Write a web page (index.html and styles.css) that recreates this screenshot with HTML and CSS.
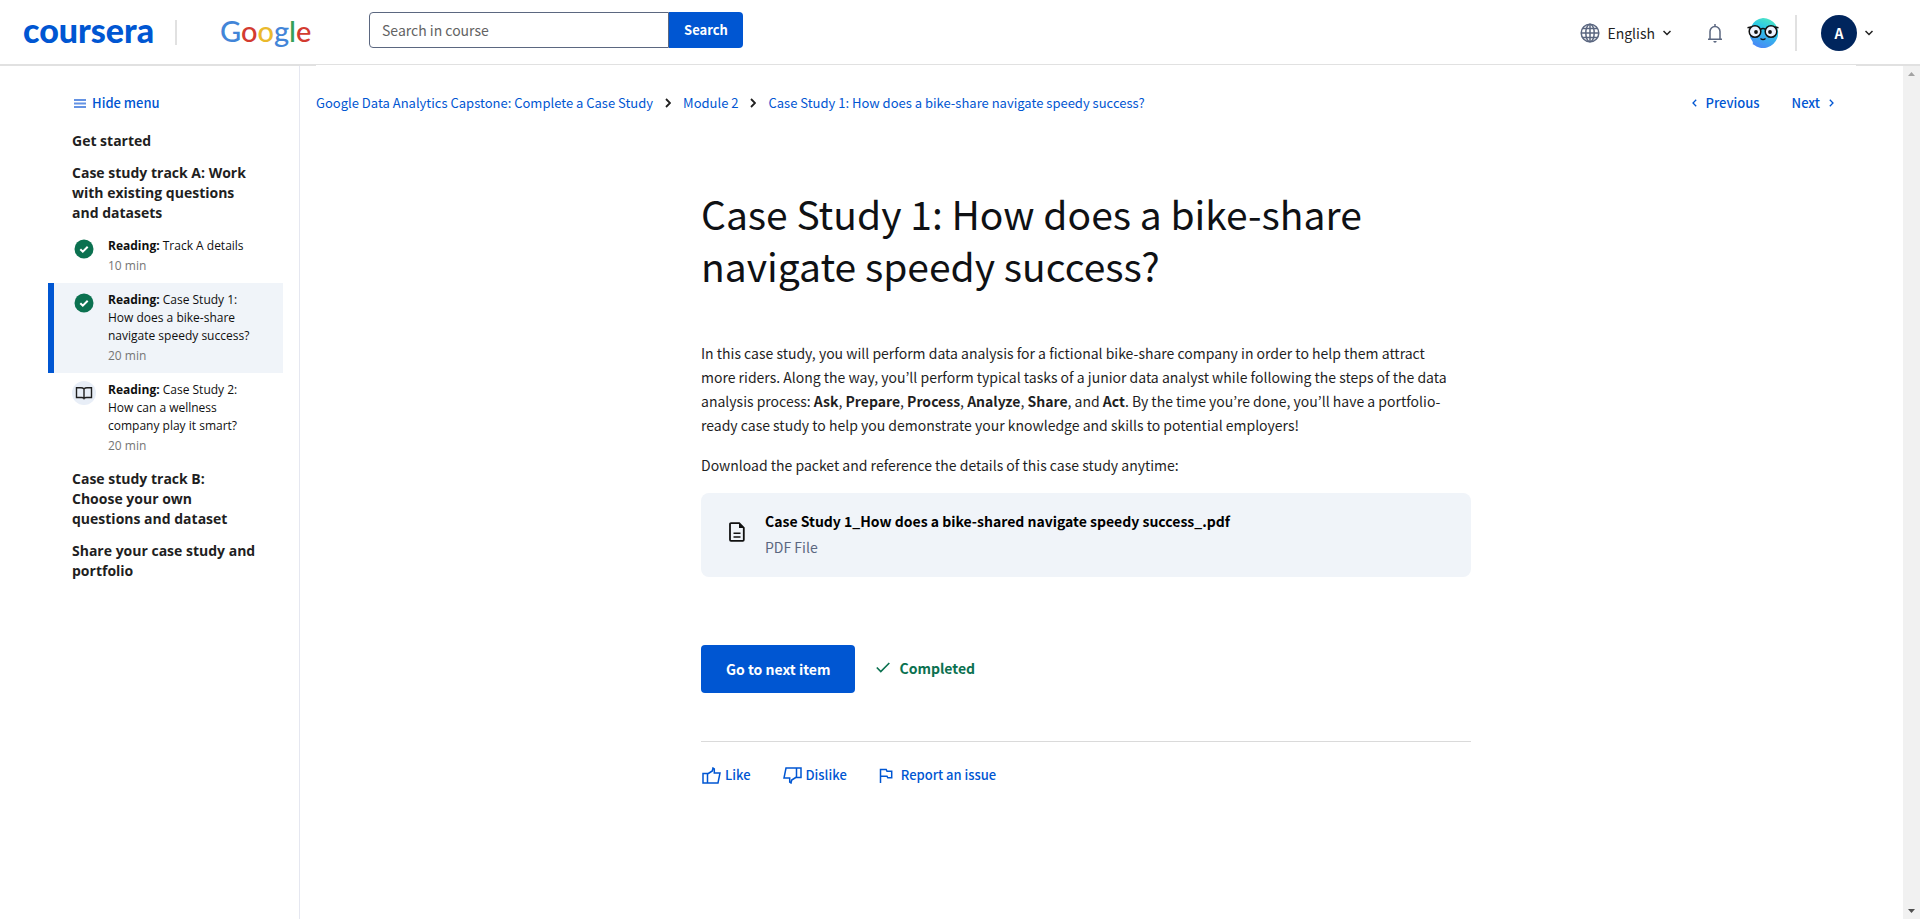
FILE: index.html
```html
<!DOCTYPE html>
<html lang="en">
<head>
<meta charset="utf-8">
<title>Case Study 1: How does a bike-share navigate speedy success? | Coursera</title>
<link rel="stylesheet" href="styles.css">
</head>
<body>
<header class="header">
  <a class="logo" href="#">coursera</a>
  <span class="logo-divider"></span>
  <a class="google" href="#" aria-label="Google"><span class="g-blue">G</span><span class="g-red">o</span><span class="g-yellow">o</span><span class="g-blue">g</span><span class="g-green">l</span><span class="g-red">e</span></a>
  <form class="search">
    <input class="search-input" type="text" placeholder="Search in course" aria-label="Search in course">
    <button class="search-button" type="button">Search</button>
  </form>
  <div class="tools">
    <button class="language" type="button">
      <svg width="20" height="20" viewBox="0 0 20 20" fill="none" stroke="#5b6780" stroke-width="1.5"><circle cx="10" cy="10" r="8.8"/><ellipse cx="10" cy="10" rx="4.2" ry="8.8"/><path d="M10 1v18M1 10h18M2.500 5.600h15M2.500 14.400h15"/></svg>
      <span>English</span>
      <svg width="8" height="6" viewBox="0 0 8 6" fill="none" stroke="#1f1f1f" stroke-width="1.500"><path d="M.5 1 4 4.500 7.500 1"/></svg>
    </button>
    <button class="bell" type="button" aria-label="Notifications">
      <svg width="16" height="20" viewBox="0 0 16 20" fill="none" stroke="#5b6780" stroke-width="1.500"><path d="M3 16V8.500a5 5 0 0 1 10 0V16M1 16.300h14M8 1v2.500"/><path d="M6.300 18h3.400a1.700 1.700 0 0 1-3.400 0z" fill="#5b6780" stroke="none"/></svg>
    </button>
    <button class="coach" type="button" aria-label="Coach">
      <svg width="32" height="32" viewBox="0 0 32 32"><defs><linearGradient id="face" x1=".7" y1="0" x2=".3" y2="1"><stop offset="0" stop-color="#4fe6c3"/><stop offset=".35" stop-color="#2bc9e6"/><stop offset="1" stop-color="#4a86f7"/></linearGradient></defs><path d="M16 1a15 15 0 1 1-9.500 26.500H5.800V25A15 15 0 0 1 16 1z" fill="url(#face)"/><g fill="#eef3ff" stroke="#111" stroke-width="1.500"><circle cx="8" cy="14.500" r="5.800"/><circle cx="24" cy="14.500" r="5.800"/></g><path d="M13.500 12.500q2.500-2 5 0M.5 10.800l3.500-.8M31.500 10.800 28 10M13.500 21.500q2.500 2.200 5 0" fill="none" stroke="#111" stroke-width="1.400"/><circle cx="9" cy="15" r="1.900" fill="#111"/><circle cx="23" cy="15" r="1.900" fill="#111"/></svg>
    </button>
    <span class="tools-divider"></span>
    <button class="account" type="button" aria-label="Account menu">
      <span class="initial">A</span>
      <svg width="8" height="6" viewBox="0 0 8 6" fill="none" stroke="#1f1f1f" stroke-width="1.500"><path d="M.5 1 4 4.500 7.500 1"/></svg>
    </button>
  </div>
</header>

<div class="body">
  <aside class="sidebar">
    <button class="hide-menu" type="button">
      <svg width="12" height="9" viewBox="0 0 12 9"><path d="M0 0h12v2H0zM0 3.500h12v2H0zM0 7h12v2H0z" fill="#6492e3"/></svg>
      <span>Hide menu</span>
    </button>
    <h2 class="section">Get started</h2>
    <h2 class="section">Case study track A: Work with existing questions and datasets</h2>
    <ul class="items">
      <li><a class="item" href="#">
        <svg class="item-icon" width="24" height="24" viewBox="0 0 24 24"><circle cx="12" cy="12" r="9.500" fill="#0b7150"/><path d="m8.300 12.200 2.500 2.500 4.900-5" fill="none" stroke="#fff" stroke-width="2"/></svg>
        <span class="item-text"><span><b>Reading:</b> Track A details</span><span class="time">10 min</span></span>
      </a></li>
      <li><a class="item current" href="#">
        <svg class="item-icon" width="24" height="24" viewBox="0 0 24 24"><circle cx="12" cy="12" r="9.500" fill="#0b7150"/><path d="m8.300 12.200 2.500 2.500 4.900-5" fill="none" stroke="#fff" stroke-width="2"/></svg>
        <span class="item-text"><span><b>Reading:</b> Case Study 1: How does a bike-share navigate speedy success?</span><span class="time">20 min</span></span>
      </a></li>
      <li><a class="item" href="#">
        <svg class="item-icon" width="24" height="24" viewBox="0 0 24 24"><circle cx="12" cy="12" r="12" fill="#e8eef7"/><path d="M12 8Q11 6.800 9 6.800H4.500v9.700H9.500q2 0 2.500 1 .5-1 2.500-1h5V6.800H15q-2 0-3 1.200zV17" fill="none" stroke="#1f1f1f" stroke-width="1.400"/></svg>
        <span class="item-text"><span><b>Reading:</b> Case Study 2: How can a wellness company play it smart?</span><span class="time">20 min</span></span>
      </a></li>
    </ul>
    <h2 class="section">Case study track B: Choose your own questions and dataset</h2>
    <h2 class="section">Share your case study and portfolio</h2>
  </aside>

  <main class="main">
    <div class="topbar">
      <nav class="crumbs" aria-label="Breadcrumb">
        <a href="#">Google Data Analytics Capstone: Complete a Case Study</a>
        <svg width="6" height="10" viewBox="0 0 6 10" fill="none" stroke="#1f1f1f" stroke-width="1.800"><path d="m1 1 4 4-4 4"/></svg>
        <a href="#">Module 2</a>
        <svg width="6" height="10" viewBox="0 0 6 10" fill="none" stroke="#1f1f1f" stroke-width="1.800"><path d="m1 1 4 4-4 4"/></svg>
        <a href="#">Case Study 1: How does a bike-share navigate speedy success?</a>
      </nav>
      <div class="pager">
        <a href="#"><svg width="5" height="8" viewBox="0 0 5 8" fill="none" stroke="#0056d2" stroke-width="1.300"><path d="M4.200.7 1 4l3.200 3.300"/></svg>Previous</a>
        <a href="#">Next<svg width="5" height="8" viewBox="0 0 5 8" fill="none" stroke="#0056d2" stroke-width="1.300"><path d="M.8.7 4 4 .8 7.300"/></svg></a>
      </div>
    </div>
    <article class="article">
      <h1>Case Study 1: How does a bike-share navigate speedy success?</h1>
      <p>In this case study, you will perform data analysis for a fictional bike-share company in order to help them attract more riders. Along the way, you’ll perform typical tasks of a junior data analyst while following the steps of the data analysis process: <b>Ask</b>, <b>Prepare</b>, <b>Process</b>, <b>Analyze</b>, <b>Share</b>, and <b>Act</b>. By the time you’re done, you’ll have a portfolio-ready case study to help you demonstrate your knowledge and skills to potential employers!</p>
      <p>Download the packet and reference the details of this case study anytime:</p>
      <a class="file" href="#">
        <svg width="16" height="20" viewBox="0 0 16 20" fill="none" stroke="#111" stroke-width="1.800"><path d="M2 1.200h8.200L14.800 5.800V17.800a1 1 0 0 1-1 1H2a1 1 0 0 1-1-1V2.200a1 1 0 0 1 1-1z"/><path d="M10 1.200V6h4.800z" fill="#111" stroke="none"/><path d="M4.500 11.300h7M4.500 15h7" stroke-width="1.400"/></svg>
        <span class="file-text"><span class="file-name">Case Study 1_How does a bike-shared navigate speedy success_.pdf</span><span class="file-kind">PDF File</span></span>
      </a>
      <div class="actions">
        <button class="next" type="button">Go to next item</button>
        <span class="completed"><svg width="14" height="11" viewBox="0 0 14 11" fill="none" stroke="#0b7150" stroke-width="1.700"><path d="m.8 5.500 4 4L13.300 1"/></svg>Completed</span>
      </div>
      <div class="feedback">
        <button type="button"><svg width="19" height="17" viewBox="0 0 19 17" fill="none" stroke="#0056d2" stroke-width="1.500"><path d="M1 6.500h4.500V16H1zM5.500 7 10.300 4 11 1l1.300.8V6H18l-2 10H5.500"/></svg>Like</button>
        <button type="button"><svg width="19" height="17" viewBox="0 0 19 17" fill="none" stroke="#0056d2" stroke-width="1.500"><path d="M18 10.500h-4.500V1H18zM13.500 10 8.700 13 8 16l-1.300-.8V11H1L3 1h10.500"/></svg>Dislike</button>
        <button class="report" type="button"><svg width="14" height="15" viewBox="0 0 14 15" fill="none" stroke="#0056d2" stroke-width="1.500"><path d="M1.500 15V1.500h5.700l.8 1.700h4.700v6.600H8.800L8 8.200H1.500"/></svg>Report an issue</button>
      </div>
    </article>
  </main>
  <div class="scrollbar" aria-hidden="true">
    <svg width="7" height="4" viewBox="0 0 7 4"><path d="M0 4 3.500 0 7 4z" fill="#a3a3a3"/></svg>
    <svg width="7" height="4" viewBox="0 0 7 4"><path d="M0 0 3.500 4 7 0z" fill="#505050"/></svg>
  </div>
</div>
</body>
</html>
```
FILE: styles.css
```css
* { box-sizing: border-box; }

body {
  margin: 0;
  min-height: 100vh;
  display: flex;
  flex-direction: column;
  background: #fff;
  color: #1f1f1f;
  font-family: "Noto Sans CJK KR", "Open Sans", sans-serif;
  font-size: 14px;
  line-height: 24px;
}

a { color: #0056d2; text-decoration: none; }

button {
  border: 0;
  padding: 0;
  background: none;
  font: inherit;
  color: inherit;
  cursor: pointer;
}

svg { flex: none; display: block; }

.header {
  display: flex;
  align-items: center;
  height: 66px;
  padding: 0 47px 0 23px;
  border-bottom: 2px solid #e1e1e1;
}

.logo {
  width: 152px;
  padding-bottom: 4px;
  font: 900 34px/40px Lato, sans-serif;
}

.logo-divider { width: 2px; height: 25px; background: #e1e1e1; }

.google {
  width: 149px;
  margin-left: 43px;
  padding-bottom: 2px;
  font: 500 29px/40px Lato, sans-serif;
}

.g-blue { color: #4285d8; }
.g-red { color: #d33b30; }
.g-yellow { color: #eab92c; }
.g-green { color: #34a058; }

.search { display: flex; height: 36px; width: 374px; align-self: flex-start; margin-top: 12px; }

.search-input {
  flex: 1;
  min-width: 0;
  padding: 0 12px;
  border: 1px solid #5b6780;
  border-radius: 4px 0 0 4px;
  font: inherit;
  color: #1f1f1f;
}

.search-input::placeholder { color: #636363; opacity: 1; }

.search-button {
  width: 74px;
  border-radius: 0 4px 4px 0;
  background: #0056d2;
  color: #fff;
  font-size: 13px;
  font-weight: 700;
}

.tools { display: flex; align-items: center; margin-left: auto; padding-top: 2px; }
.language { display: flex; align-items: center; gap: 7px; }
.language span { margin-right: 1px; }
.bell { margin-left: 36px; }
.coach { margin-left: 24px; }
.tools-divider { width: 2px; height: 36px; margin: 0 24px 0 16px; background: #e1e1e1; }
.account { display: flex; align-items: center; gap: 8px; }

.initial {
  width: 36px;
  height: 36px;
  border-radius: 50%;
  background: #00255d;
  color: #fff;
  font-weight: 700;
  line-height: 36px;
}

.body { flex: 1; display: flex; }

.sidebar {
  width: 300px;
  padding: 26px 16px 0 48px;
  border-right: 1px solid #e5e7f0;
}

.hide-menu {
  display: flex;
  align-items: center;
  gap: 6px;
  margin: 0 0 11px 26px;
  height: 22px;
  color: #0056d2;
  font-size: 13px;
  font-weight: 500;
}

.section {
  margin: 0;
  padding: 6px 24px;
  font: 700 14px/20px "Open Sans", sans-serif;
}

.items { margin: 0; padding: 0; list-style: none; }

.item {
  display: flex;
  gap: 12px;
  padding: 8px 24px 8px 18px;
  border-left: 6px solid transparent;
  color: #0f0f0f;
  font: 400 12px/18px "Open Sans", sans-serif;
}

.item.current { background: #f0f4f9; border-color: #0056d2; }
.item-text { display: flex; flex-direction: column; gap: 2px; }
.time { color: #757575; }

.main { flex: 1; padding: 0 47px 0 16px; }

.topbar {
  position: relative;
  display: flex;
  align-items: center;
  justify-content: space-between;
  height: 75px;
  margin-top: -1px;
  padding-right: 22px;
  background: #fff;
  font-size: 13px;
}

.crumbs { display: flex; align-items: center; gap: 12px; }
.pager { display: flex; gap: 32px; font-weight: 500; }
.pager a { display: flex; align-items: center; gap: 9px; }

.article { width: 50%; margin: 0 auto; padding-top: 47px; }

.article h1 {
  margin: 0 0 50px;
  color: #0f1114;
  font-size: 39px;
  font-weight: 400;
  line-height: 52px;
}

.article p { margin: 0 0 16px; padding-right: 12px; }

.file {
  display: flex;
  align-items: center;
  gap: 20px;
  height: 84px;
  padding: 0 28px;
  border-radius: 8px;
  background: #f0f4f9;
}

.file svg { margin-bottom: 6px; }
.file-text { display: flex; flex-direction: column; gap: 2px; padding-bottom: 2px; }
.file-name { color: #000; font-weight: 700; }
.file-kind { color: #5b6780; }

.actions { display: flex; align-items: center; gap: 21px; margin-top: 68px; }

.next {
  height: 48px;
  padding: 0 25px;
  border-radius: 4px;
  background: #0056d2;
  color: #fff;
  font-weight: 700;
}

.completed {
  display: flex;
  align-items: center;
  gap: 9px;
  padding-bottom: 3px;
  color: #0b7150;
  font-weight: 700;
}

.feedback {
  display: flex;
  gap: 32px;
  margin-top: 48px;
  padding: 21px 1px 0;
  border-top: 1px solid #dadada;
  color: #0056d2;
  font-size: 13px;
  font-weight: 500;
}

.feedback button { display: flex; align-items: center; gap: 4px; }
.feedback .report { gap: 8px; }

.scrollbar {
  width: 17px;
  display: flex;
  flex-direction: column;
  align-items: center;
  justify-content: space-between;
  padding: 6px 0;
  background: #f1f1f1;
}
```
